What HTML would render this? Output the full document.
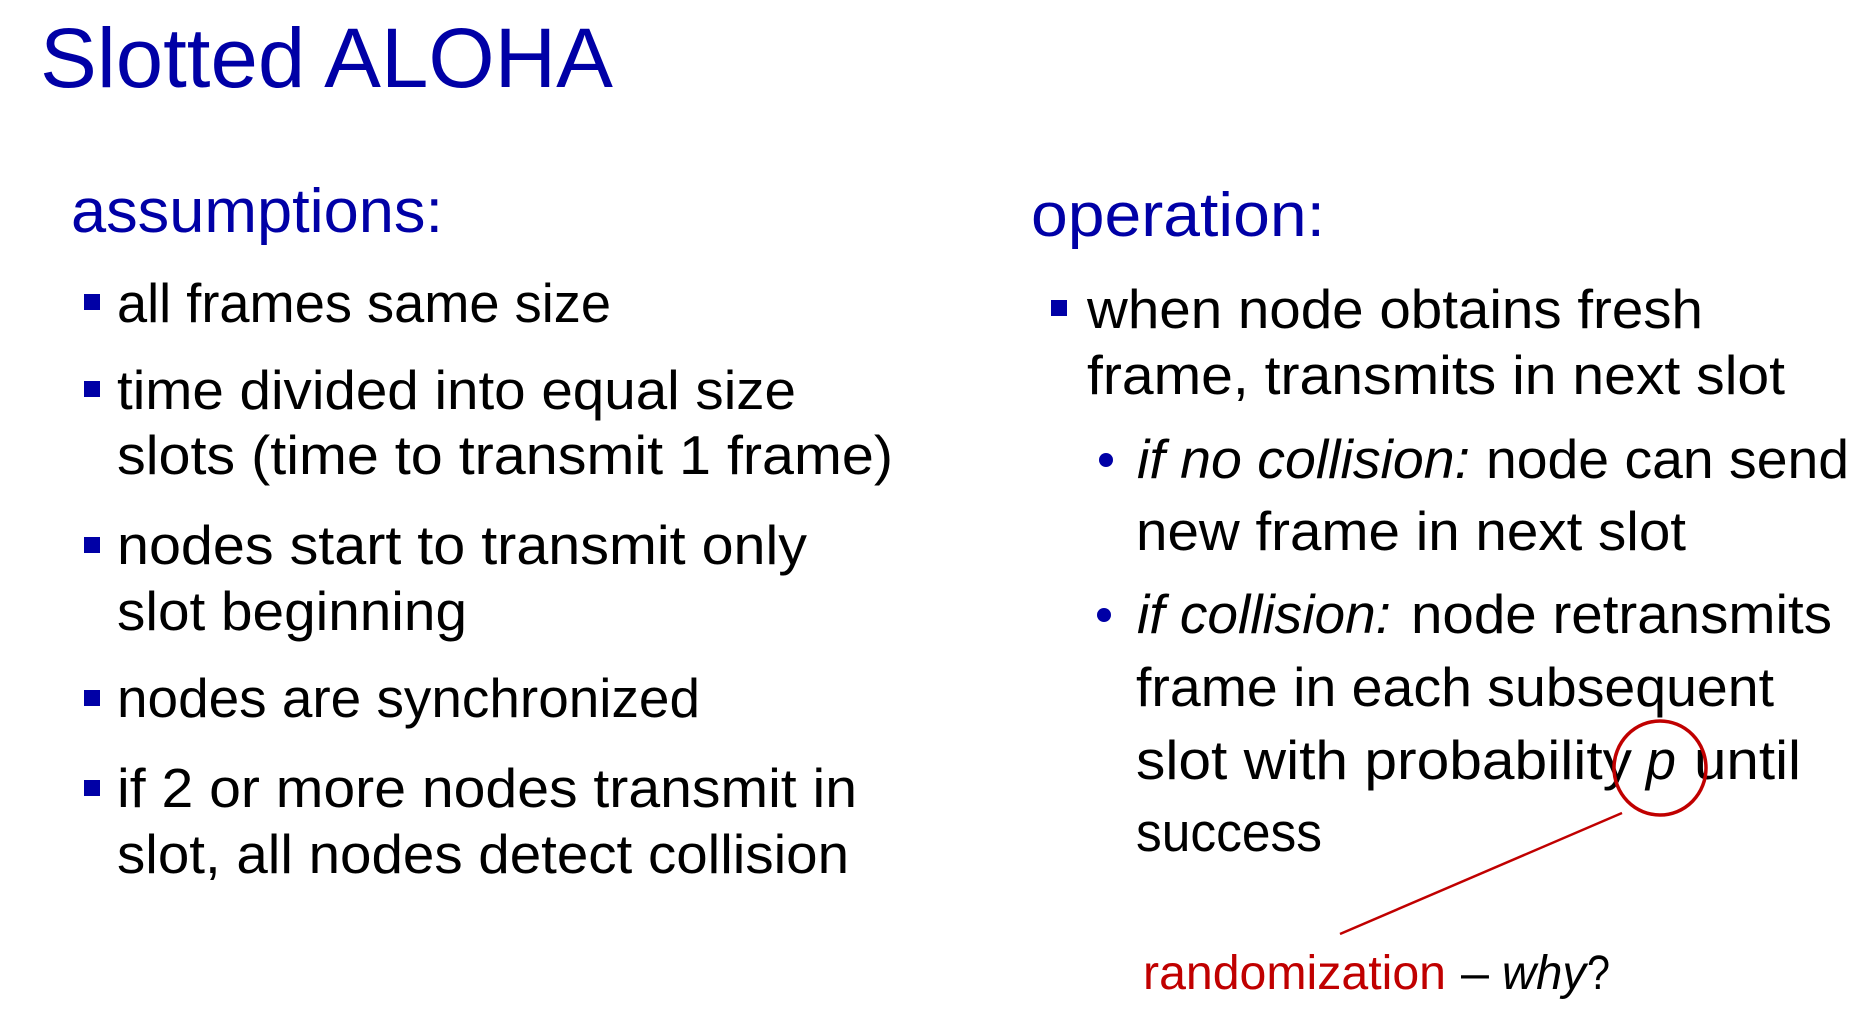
<!DOCTYPE html>
<html><head><meta charset="utf-8"><style>
html,body{margin:0;padding:0;background:#fff;width:1867px;height:1015px;overflow:hidden}
svg{display:block}
text{font-family:"Liberation Sans",sans-serif}
.b{fill:#0000a6}
.t{fill:#000;font-size:55px}
.i{font-style:italic}
</style></head><body>
<svg width="1867" height="1015" viewBox="0 0 1867 1015" xmlns="http://www.w3.org/2000/svg">
<text x="40" y="87" class="b" font-size="84" textLength="573" lengthAdjust="spacingAndGlyphs">Slotted ALOHA</text>
<text x="71" y="232" class="b" font-size="62" textLength="372" lengthAdjust="spacingAndGlyphs">assumptions:</text>

<rect x="84" y="294" width="16" height="16" class="b"/>
<text x="117" y="322" class="t" textLength="494" lengthAdjust="spacingAndGlyphs">all frames same size</text>
<rect x="84" y="381" width="16" height="16" class="b"/>
<text x="117" y="409" class="t" textLength="679" lengthAdjust="spacingAndGlyphs">time divided into equal size</text>
<text x="117" y="474" class="t" textLength="776" lengthAdjust="spacingAndGlyphs">slots (time to transmit 1 frame)</text>
<rect x="84" y="537" width="16" height="16" class="b"/>
<text x="117" y="564" class="t" textLength="690" lengthAdjust="spacingAndGlyphs">nodes start to transmit only</text>
<text x="117" y="630" class="t" textLength="350" lengthAdjust="spacingAndGlyphs">slot beginning</text>
<rect x="84" y="690" width="16" height="16" class="b"/>
<text x="117" y="717" class="t" textLength="583" lengthAdjust="spacingAndGlyphs">nodes are synchronized</text>
<rect x="84" y="780" width="16" height="16" class="b"/>
<text x="117" y="807" class="t" textLength="740" lengthAdjust="spacingAndGlyphs">if 2 or more nodes transmit in</text>
<text x="117" y="873" class="t" textLength="732" lengthAdjust="spacingAndGlyphs">slot, all nodes detect collision</text>

<text x="1031" y="236" class="b" font-size="62" textLength="294" lengthAdjust="spacingAndGlyphs">operation:</text>
<rect x="1051" y="300" width="16" height="16" class="b"/>
<text x="1087" y="328" class="t" textLength="616" lengthAdjust="spacingAndGlyphs">when node obtains fresh</text>
<text x="1087" y="394" class="t" textLength="698" lengthAdjust="spacingAndGlyphs">frame, transmits in next slot</text>

<circle cx="1106" cy="460" r="7" class="b"/>
<text x="1137" y="478" class="t i" textLength="333" lengthAdjust="spacingAndGlyphs">if no collision:</text>
<text x="1486" y="478" class="t" textLength="363" lengthAdjust="spacingAndGlyphs">node can send</text>
<text x="1136" y="550" class="t" textLength="550" lengthAdjust="spacingAndGlyphs">new frame in next slot</text>

<circle cx="1104" cy="615" r="7" class="b"/>
<text x="1137" y="633" class="t i" textLength="254" lengthAdjust="spacingAndGlyphs">if collision:</text>
<text x="1411" y="633" class="t" textLength="421" lengthAdjust="spacingAndGlyphs">node retransmits</text>
<text x="1136" y="706" class="t" textLength="638" lengthAdjust="spacingAndGlyphs">frame in each subsequent</text>
<text x="1136" y="779" class="t" textLength="496" lengthAdjust="spacingAndGlyphs">slot with probability</text>
<text x="1646" y="779" class="t i" textLength="30" lengthAdjust="spacingAndGlyphs">p</text>
<text x="1694" y="779" class="t" textLength="107" lengthAdjust="spacingAndGlyphs">until</text>
<text x="1136" y="851" class="t" font-size="58" textLength="186" lengthAdjust="spacingAndGlyphs">success</text>

<ellipse cx="1660" cy="768" rx="46" ry="47" fill="none" stroke="#c00000" stroke-width="3.5"/>
<line x1="1622" y1="813" x2="1340" y2="934" stroke="#c00000" stroke-width="2.5"/>

<text x="1143" y="989" font-size="48" fill="#c00000" textLength="303" lengthAdjust="spacingAndGlyphs">randomization</text>
<text x="1461" y="989" font-size="48" fill="#000" textLength="28" lengthAdjust="spacingAndGlyphs">–</text>
<text x="1502" y="989" font-size="48" fill="#000" class="i" textLength="84" lengthAdjust="spacingAndGlyphs">why</text>
<text x="1587" y="989" font-size="48" fill="#000" textLength="23" lengthAdjust="spacingAndGlyphs">?</text>
</svg>
</body></html>
